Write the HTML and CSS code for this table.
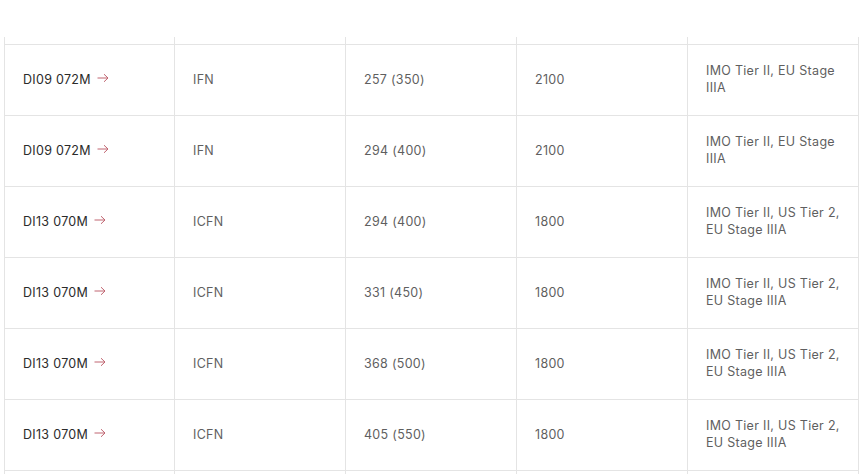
FILE: index.html
```html
<!DOCTYPE html>
<html>
<head>
<meta charset="utf-8">
<link rel="stylesheet" href="styles.css">
</head>
<body>
<div class="page">
  <div class="table">
    <div class="row spacer"><div class="cell"></div><div class="cell"></div><div class="cell"></div><div class="cell"></div><div class="cell"></div></div>
    <div class="row"><div class="cell model">DI09 072M <svg class="arrow" viewBox="0 0 12 10" width="12" height="10"><path d="M0.5 5H11M7 1.2L11 5L7 8.8"/></svg></div><div class="cell">IFN</div><div class="cell">257 (350)</div><div class="cell">2100</div><div class="cell">IMO Tier II, EU Stage IIIA</div></div>
    <div class="row"><div class="cell model">DI09 072M <svg class="arrow" viewBox="0 0 12 10" width="12" height="10"><path d="M0.5 5H11M7 1.2L11 5L7 8.8"/></svg></div><div class="cell">IFN</div><div class="cell">294 (400)</div><div class="cell">2100</div><div class="cell">IMO Tier II, EU Stage IIIA</div></div>
    <div class="row"><div class="cell model">DI13 070M <svg class="arrow" viewBox="0 0 12 10" width="12" height="10"><path d="M0.5 5H11M7 1.2L11 5L7 8.8"/></svg></div><div class="cell">ICFN</div><div class="cell">294 (400)</div><div class="cell">1800</div><div class="cell">IMO Tier II, US Tier 2, EU Stage IIIA</div></div>
    <div class="row"><div class="cell model">DI13 070M <svg class="arrow" viewBox="0 0 12 10" width="12" height="10"><path d="M0.5 5H11M7 1.2L11 5L7 8.8"/></svg></div><div class="cell">ICFN</div><div class="cell">331 (450)</div><div class="cell">1800</div><div class="cell">IMO Tier II, US Tier 2, EU Stage IIIA</div></div>
    <div class="row"><div class="cell model">DI13 070M <svg class="arrow" viewBox="0 0 12 10" width="12" height="10"><path d="M0.5 5H11M7 1.2L11 5L7 8.8"/></svg></div><div class="cell">ICFN</div><div class="cell">368 (500)</div><div class="cell">1800</div><div class="cell">IMO Tier II, US Tier 2, EU Stage IIIA</div></div>
    <div class="row"><div class="cell model">DI13 070M <svg class="arrow" viewBox="0 0 12 10" width="12" height="10"><path d="M0.5 5H11M7 1.2L11 5L7 8.8"/></svg></div><div class="cell">ICFN</div><div class="cell">405 (550)</div><div class="cell">1800</div><div class="cell">IMO Tier II, US Tier 2, EU Stage IIIA</div></div>
    <div class="row tail"><div class="cell"></div><div class="cell"></div><div class="cell"></div><div class="cell"></div><div class="cell"></div></div>
  </div>
</div>
</body>
</html>
```

FILE: styles.css
```css
html, body {
  margin: 0;
  padding: 0;
  background: #fff;
  overflow: hidden;
}
.page {
  width: 863px;
  height: 474px;
  padding: 37px 0 0 4px;
  box-sizing: border-box;
  overflow: hidden;
}
.table {
  width: 855px;
  border-left: 1px solid #e4e4e4;
  box-sizing: border-box;
  font-family: Inter, "Noto Sans", sans-serif;
  font-size: 12.5px;
  letter-spacing: 0.3px;
  line-height: 17px;
  color: #5f5f5f;
}
.row {
  display: grid;
  grid-template-columns: 170px 171px 171px 171px 171px;
  border-bottom: 1px solid #e4e4e4;
}
.cell {
  height: 70px;
  border-right: 1px solid #e4e4e4;
  padding: 0 18px 2px;
  box-sizing: border-box;
  display: flex;
  align-items: center;
}
.spacer .cell { height: 7px; padding: 0; }
.tail { border-bottom: none; }
.tail .cell { height: 20px; }
.model {
  color: #2b2b2b;
}
.arrow {
  margin-left: 6px;
  margin-top: -3px;
  fill: none;
  stroke: #c06470;
  stroke-width: 1;
}
```
